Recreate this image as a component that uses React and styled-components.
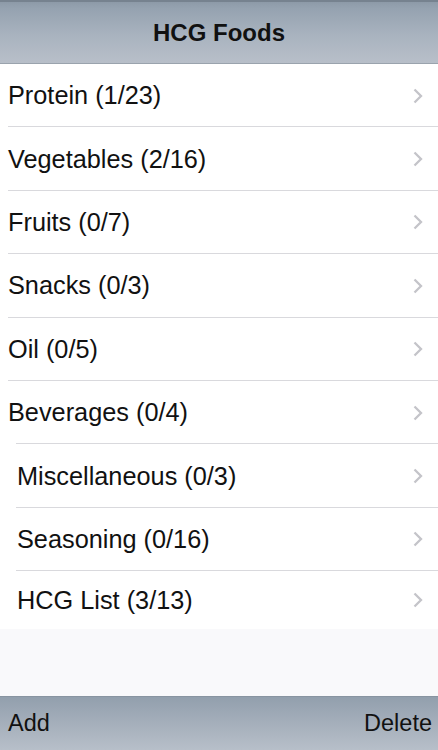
import React from 'react';
import styled, { createGlobalStyle } from 'styled-components';

const GlobalStyle = createGlobalStyle`
  html, body {
    margin: 0;
    padding: 0;
    background: #f9f9fb;
  }
  body {
    font-family: "Liberation Sans", Arial, sans-serif;
  }
`;

const Screen = styled.div`
  width: 438px;
  height: 750px;
  display: flex;
  flex-direction: column;
  overflow: hidden;
  background: #f9f9fb;
`;

const NavBar = styled.div`
  height: 61px;
  flex: none;
  display: flex;
  align-items: center;
  justify-content: center;
  background: linear-gradient(#8d9aa8 0%, #95a2b0 10%, #a9b3bf 55%, #b8bfc9 100%);
  border-top: 2px solid #76828f;
  border-bottom: 1px solid #9aa3ad;
`;

const Title = styled.h1`
  margin: 0;
  font-size: 24px;
  font-weight: 700;
  color: #111;
`;

const List = styled.div`
  background: #fff;
  flex: none;
`;

const Row = styled.div`
  height: ${p => (p.last ? '58px' : '63.4px')};
  box-sizing: border-box;
  display: flex;
  align-items: center;
  justify-content: space-between;
  padding: 0 15px 0 ${p => (p.indent ? '17px' : '8px')};
  position: relative;
  &::after {
    content: '';
    display: ${p => (p.last ? 'none' : 'block')};
    position: absolute;
    left: ${p => (p.sepIndent ? '16px' : '8px')};
    right: 0;
    bottom: 0;
    height: 1px;
    background: #d9d9dd;
  }
`;

const Label = styled.span`
  font-size: 25.3px;
  color: #111;
`;

const Chevron = () => (
  <svg width="10" height="16" viewBox="0 0 10 16">
    <path d="M1.5 1.5 L8 8 L1.5 14.5" fill="none" stroke="#c4c4c9" strokeWidth="2.3" />
  </svg>
);

const Filler = styled.div`
  flex: 1;
  background: #f9f9fb;
`;

const Toolbar = styled.div`
  height: 53px;
  flex: none;
  display: flex;
  align-items: center;
  justify-content: space-between;
  padding: 0 6px 0 8px;
  background: linear-gradient(#929fad 0%, #a5afbb 50%, #b7bfc9 100%);
  border-top: 1px solid #8894a1;
`;

const BarButton = styled.span`
  font-size: 23.5px;
  color: #111;
`;

const items = [
  { name: 'Protein (1/23)' },
  { name: 'Vegetables (2/16)' },
  { name: 'Fruits (0/7)' },
  { name: 'Snacks (0/3)' },
  { name: 'Oil (0/5)' },
  { name: 'Beverages (0/4)', sepIndent: true },
  { name: 'Miscellaneous (0/3)', indent: true, sepIndent: true },
  { name: 'Seasoning (0/16)', indent: true, sepIndent: true },
  { name: 'HCG List (3/13)', indent: true, last: true },
];

const App = () => {
  return (
    <Screen>
      <GlobalStyle />
      <NavBar>
        <Title>HCG Foods</Title>
      </NavBar>
      <List>
        {items.map(item => (
          <Row key={item.name} indent={item.indent} sepIndent={item.sepIndent} last={item.last}>
            <Label>{item.name}</Label>
            <Chevron />
          </Row>
        ))}
      </List>
      <Filler />
      <Toolbar>
        <BarButton>Add</BarButton>
        <BarButton>Delete</BarButton>
      </Toolbar>
    </Screen>
  );
};

export default App;
